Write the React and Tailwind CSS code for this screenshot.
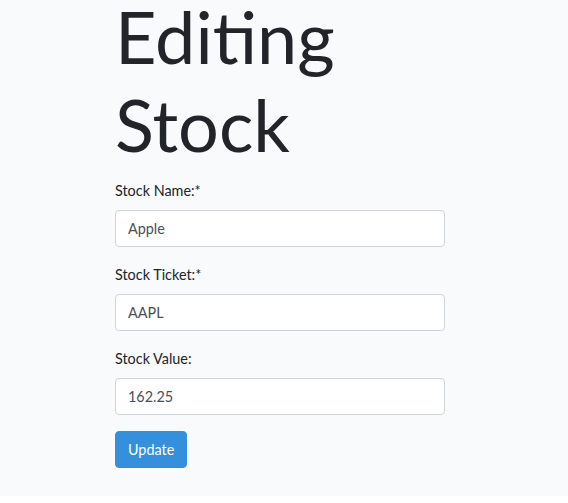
import React, { useState } from "react";

const Field = ({ label, value, onChange }) => (
  <div className="mb-4">
    <label className="block mb-2 text-[14.4px] leading-[23px] text-[#212529]">
      {label}
    </label>
    <input
      value={value}
      onChange={(e) => onChange(e.target.value)}
      className="block w-full h-[37px] px-3 bg-white border border-[#ced4da] rounded text-[14.4px] text-[#495057] outline-none"
    />
  </div>
);

const App = () => {
  const [name, setName] = useState("Apple");
  const [ticket, setTicket] = useState("AAPL");
  const [value, setValue] = useState("162.25");

  return (
    <div
      className="min-h-screen bg-[#f8fafc] text-[#212529]"
      style={{ fontFamily: "Lato, 'Noto Sans', sans-serif" }}
    >
      <div className="ml-[115px] w-[330px]">
        <h1 className="-mt-[7px] mb-[11px] text-[72px] leading-[87.5px] font-normal">
          Editing Stock
        </h1>

        <form onSubmit={(e) => e.preventDefault()}>
          <Field label="Stock Name:*" value={name} onChange={setName} />
          <Field label="Stock Ticket:*" value={ticket} onChange={setTicket} />
          <Field label="Stock Value:" value={value} onChange={setValue} />

          <button
            type="submit"
            className="h-[37px] px-3 rounded bg-[#3490dc] border border-[#3490dc] text-white text-[14.4px]"
          >
            Update
          </button>
        </form>
      </div>
    </div>
  );
};

export default App;
